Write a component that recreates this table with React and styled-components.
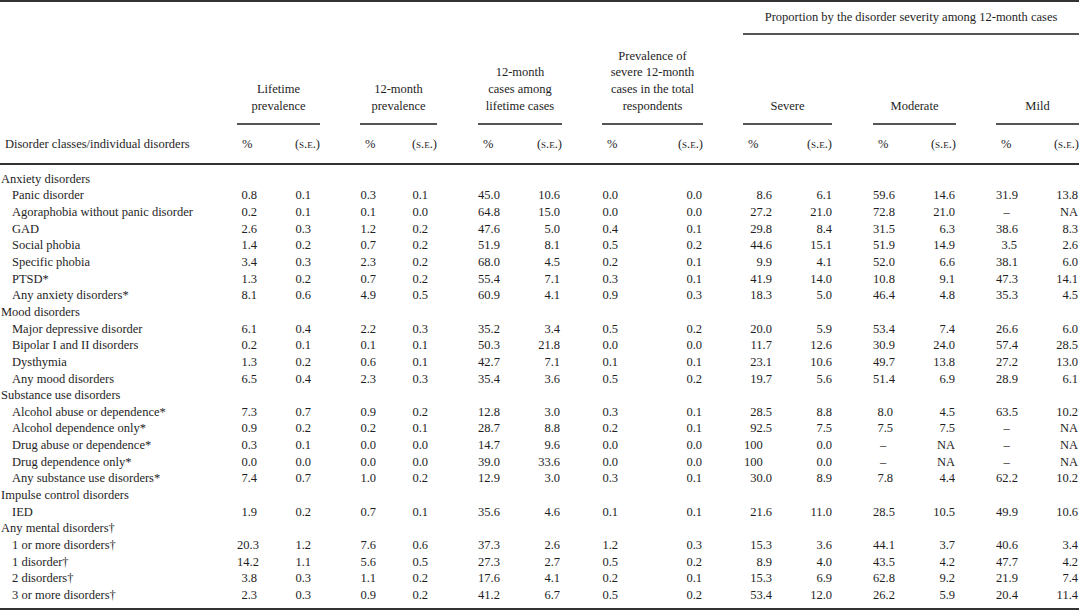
import React from 'react'
import styled, { createGlobalStyle } from 'styled-components'

const GlobalStyle = createGlobalStyle`
  html, body {
    margin: 0;
    padding: 0;
    background: #fff;
  }
  body {
    font-family: 'Liberation Serif', 'Times New Roman', serif;
    color: #1e1e1e;
  }
`

// widths of the % column, the s.e. column and the s.e. right padding per group
const groups = [
  { title: ['Lifetime', 'prevalence'], pw: 20, sw: 63, sp: 9, gap: 0 },
  { title: ['12-month', 'prevalence'], pw: 16, sw: 61, sp: 9, gap: 40 },
  { title: ['12-month', 'cases among', 'lifetime cases'], pw: 20, sw: 64, sp: 2, gap: 41 },
  {
    title: ['Prevalence of', 'severe 12-month', 'cases in the total', 'respondents'],
    pw: 16,
    sw: 85,
    sp: 1,
    gap: 40,
  },
  { title: ['Severe'], pw: 29, sw: 60, sp: 0, gap: 40 },
  { title: ['Moderate'], pw: 20, sw: 63, sp: 1, gap: 41 },
  { title: ['Mild'], pw: 21, sw: 62, sp: 1, gap: 40 },
]

const rows = [
  { label: 'Anxiety disorders' },
  { label: 'Panic disorder', v: '0.8 0.1 0.3 0.1 45.0 10.6 0.0 0.0 8.6 6.1 59.6 14.6 31.9 13.8' },
  { label: 'Agoraphobia without panic disorder', v: '0.2 0.1 0.1 0.0 64.8 15.0 0.0 0.0 27.2 21.0 72.8 21.0 – NA' },
  { label: 'GAD', v: '2.6 0.3 1.2 0.2 47.6 5.0 0.4 0.1 29.8 8.4 31.5 6.3 38.6 8.3' },
  { label: 'Social phobia', v: '1.4 0.2 0.7 0.2 51.9 8.1 0.5 0.2 44.6 15.1 51.9 14.9 3.5 2.6' },
  { label: 'Specific phobia', v: '3.4 0.3 2.3 0.2 68.0 4.5 0.2 0.1 9.9 4.1 52.0 6.6 38.1 6.0' },
  { label: 'PTSD*', v: '1.3 0.2 0.7 0.2 55.4 7.1 0.3 0.1 41.9 14.0 10.8 9.1 47.3 14.1' },
  { label: 'Any anxiety disorders*', v: '8.1 0.6 4.9 0.5 60.9 4.1 0.9 0.3 18.3 5.0 46.4 4.8 35.3 4.5' },
  { label: 'Mood disorders' },
  { label: 'Major depressive disorder', v: '6.1 0.4 2.2 0.3 35.2 3.4 0.5 0.2 20.0 5.9 53.4 7.4 26.6 6.0' },
  { label: 'Bipolar I and II disorders', v: '0.2 0.1 0.1 0.1 50.3 21.8 0.0 0.0 11.7 12.6 30.9 24.0 57.4 28.5' },
  { label: 'Dysthymia', v: '1.3 0.2 0.6 0.1 42.7 7.1 0.1 0.1 23.1 10.6 49.7 13.8 27.2 13.0' },
  { label: 'Any mood disorders', v: '6.5 0.4 2.3 0.3 35.4 3.6 0.5 0.2 19.7 5.6 51.4 6.9 28.9 6.1' },
  { label: 'Substance use disorders' },
  { label: 'Alcohol abuse or dependence*', v: '7.3 0.7 0.9 0.2 12.8 3.0 0.3 0.1 28.5 8.8 8.0 4.5 63.5 10.2' },
  { label: 'Alcohol dependence only*', v: '0.9 0.2 0.2 0.1 28.7 8.8 0.2 0.1 92.5 7.5 7.5 7.5 – NA' },
  { label: 'Drug abuse or dependence*', v: '0.3 0.1 0.0 0.0 14.7 9.6 0.0 0.0 100 0.0 – NA – NA' },
  { label: 'Drug dependence only*', v: '0.0 0.0 0.0 0.0 39.0 33.6 0.0 0.0 100 0.0 – NA – NA' },
  { label: 'Any substance use disorders*', v: '7.4 0.7 1.0 0.2 12.9 3.0 0.3 0.1 30.0 8.9 7.8 4.4 62.2 10.2' },
  { label: 'Impulse control disorders' },
  { label: 'IED', v: '1.9 0.2 0.7 0.1 35.6 4.6 0.1 0.1 21.6 11.0 28.5 10.5 49.9 10.6' },
  { label: 'Any mental disorders†' },
  { label: '1 or more disorders†', v: '20.3 1.2 7.6 0.6 37.3 2.6 1.2 0.3 15.3 3.6 44.1 3.7 40.6 3.4' },
  { label: '1 disorder†', v: '14.2 1.1 5.6 0.5 27.3 2.7 0.5 0.2 8.9 4.0 43.5 4.2 47.7 4.2' },
  { label: '2 disorders†', v: '3.8 0.3 1.1 0.2 17.6 4.1 0.2 0.1 15.3 6.9 62.8 9.2 21.9 7.4' },
  { label: '3 or more disorders†', v: '2.3 0.3 0.9 0.2 41.2 6.7 0.5 0.2 53.4 12.0 26.2 5.9 20.4 11.4' },
]

const TOTAL_COLS = 1 + groups.length * 2 + (groups.length - 1)

const Table = styled.table`
  width: 1079px;
  table-layout: fixed;
  border-collapse: separate;
  border-spacing: 0;
  border-top: 2px solid #333;
  border-bottom: 2px solid #333;
  font-family: 'Liberation Serif', 'Times New Roman', serif;
  font-size: 12.5px;
  line-height: 16.64px;
  color: #1e1e1e;
`

const SpanHead = styled.th`
  font-weight: normal;
  text-align: center;
  padding: 7px 0;
  border-bottom: 2px solid #555;
  white-space: nowrap;
`

const GroupHead = styled.th`
  font-weight: normal;
  text-align: center;
  vertical-align: bottom;
  padding: 13px 0 9px;
  border-bottom: 2px solid #555;
  white-space: nowrap;
`

const Blank = styled.th`
  padding: 0;
`

const SubHead = styled.th`
  font-weight: normal;
  text-align: ${({ $right }) => ($right ? 'right' : 'left')};
  padding: 11px 0 10px ${({ $right }) => ($right ? '0' : '5px')};
  border-bottom: 2px solid #333;
  white-space: nowrap;
`

const SmallCaps = styled.span`
  font-variant: small-caps;
`

const Row = styled.tr`
  &:first-child > td {
    padding-top: 6px;
  }
  &:last-child > td {
    padding-bottom: 4px;
  }
`

const Label = styled.td`
  padding: 0 0 0 ${({ $indent }) => ($indent ? '12px' : '1px')};
  text-align: left;
  white-space: nowrap;
`

const Num = styled.td`
  padding: 0 ${({ $pad }) => $pad || 0}px 0 0;
  text-align: ${({ $center }) => ($center ? 'center' : 'right')};
  white-space: nowrap;
`

const Gap = styled.td`
  padding: 0;
`

const Ghost = styled.span`
  visibility: hidden;
`

const Pct = ({ v }) => {
  if (v === '–') return <Num $center>{v}</Num>
  if (!v.includes('.'))
    return (
      <Num>
        {v}
        <Ghost>.0</Ghost>
      </Num>
    )
  return <Num>{v}</Num>
}

const DataRow = ({ label, v }) => {
  if (!v)
    return (
      <Row>
        <Label colSpan={TOTAL_COLS}>{label}</Label>
      </Row>
    )
  const values = v.split(' ')
  return (
    <Row>
      <Label $indent>{label}</Label>
      {groups.map((g, i) => (
        <React.Fragment key={i}>
          {i > 0 && <Gap />}
          <Pct v={values[i * 2]} />
          <Num $pad={g.sp}>{values[i * 2 + 1]}</Num>
        </React.Fragment>
      ))}
    </Row>
  )
}

const App = () => (
  <>
    <GlobalStyle />
    <Table>
      <colgroup>
        <col style={{ width: 237 }} />
        {groups.map((g, i) => (
          <React.Fragment key={i}>
            {i > 0 && <col style={{ width: g.gap }} />}
            <col style={{ width: g.pw }} />
            <col style={{ width: g.sw }} />
          </React.Fragment>
        ))}
      </colgroup>
      <thead>
        <tr>
          <Blank colSpan={13} />
          <SpanHead colSpan={8}>Proportion by the disorder severity among 12-month cases</SpanHead>
        </tr>
        <tr>
          <Blank />
          {groups.map((g, i) => (
            <React.Fragment key={i}>
              {i > 0 && <Blank />}
              <GroupHead colSpan={2}>
                {g.title.map((line, j) => (
                  <React.Fragment key={j}>
                    {j > 0 && <br />}
                    {line}
                  </React.Fragment>
                ))}
              </GroupHead>
            </React.Fragment>
          ))}
        </tr>
        <tr>
          <SubHead>Disorder classes/individual disorders</SubHead>
          {groups.map((g, i) => (
            <React.Fragment key={i}>
              {i > 0 && <SubHead />}
              <SubHead>%</SubHead>
              <SubHead $right>
                (<SmallCaps>s.e.</SmallCaps>)
              </SubHead>
            </React.Fragment>
          ))}
        </tr>
      </thead>
      <tbody>
        {rows.map((r, i) => (
          <DataRow key={i} label={r.label} v={r.v} />
        ))}
      </tbody>
    </Table>
  </>
)

export default App
